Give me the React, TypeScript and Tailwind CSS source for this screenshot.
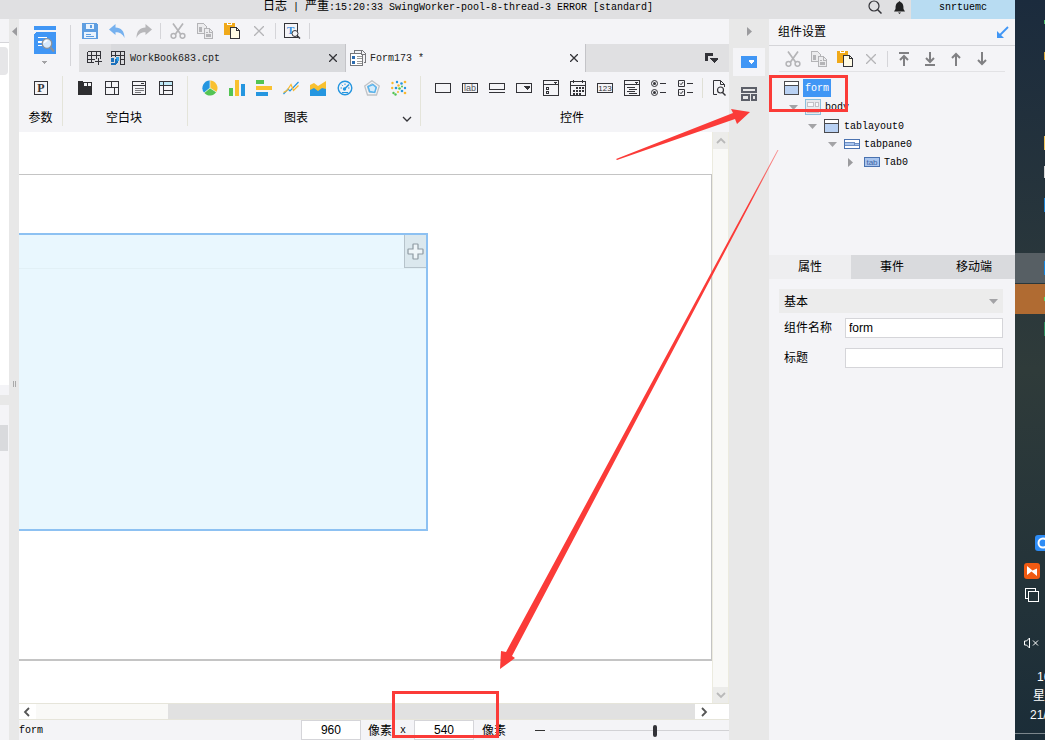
import type { ReactNode } from "react";

const CJK = "font-['Liberation_Sans','Noto_Sans_CJK_SC',sans-serif]";
const MONO = "font-['Liberation_Mono','Noto_Sans_CJK_SC',monospace]";

function Svg({ children, w = 16, h = 16, crisp = true }: { children: ReactNode; w?: number; h?: number; crisp?: boolean }) {
  return (
    <svg
      width={w}
      height={h}
      viewBox={`0 0 ${w} ${h}`}
      fill="none"
      shapeRendering={crisp ? "crispEdges" : "auto"}
      className="block shrink-0"
      aria-hidden="true"
    >
      {children}
    </svg>
  );
}

const K = "#333338";
const G = "#b4b4b7";

const Save = () => (
  <Svg>
    <path d="M0 0h14l2 2v14H0z" fill="#5f9ee0" />
    <path d="M4 1h8v5H4z" fill="#eaf3fd" />
    <path d="M8 2h2v3H8z" fill="#5f9ee0" />
    <path d="M2 9h12v6H2z" fill="#eaf3fd" />
    <path d="M4 11h5v1H4zM4 13h8v1H4z" fill="#5f9ee0" />
  </Svg>
);
const Undo = () => (
  <Svg crisp={false}>
    <path d="M0 6.500 6.500 1v3.500C12 4.500 15.500 8 15.500 15 13.500 11 11 9.300 6.500 9.300V12z" fill="#76b1ef" />
  </Svg>
);
const Redo = () => (
  <Svg crisp={false}>
    <path d="M16 6.500 9.500 1v3.500C4 4.500.500 8 .500 15 2.500 11 5 9.300 9.500 9.300V12z" fill="#b7b7ba" />
  </Svg>
);
const Cut = () => (
  <Svg crisp={false}>
    <path d="M3 0.500 10.500 11M13 0.500 5.500 11" stroke={G} strokeWidth="1.700" />
    <circle cx="3.500" cy="12.800" r="2.400" stroke={G} strokeWidth="1.500" />
    <circle cx="12.500" cy="12.800" r="2.400" stroke={G} strokeWidth="1.500" />
  </Svg>
);
const Copy = () => (
  <Svg>
    <path d="M.5.500h6l3 3v7h-9z" stroke={G} fill="#ececee" />
    <path d="M2 4h3v5H2z" fill={G} />
    <path d="M7.500 5.500h5l3 3v7h-8z" stroke={G} fill="#ececee" />
    <path d="M9 9h2v1H9zM9 11h5v3H9zM12 6h1v3h2v1h-3z" fill={G} />
  </Svg>
);
const Paste = () => (
  <Svg>
    <path d="M0 0h11v12H0z" fill="#f0a919" />
    <path d="M3 0h5v2H3z" fill="#fff" />
    <path d="M4 0h3v1H4z" fill="#f0a919" />
    <path d="M6.500 4.500h6l3 3v8h-9z" fill="#fffbe6" stroke={K} />
    <path d="M12.500 4.500v3h3" stroke={K} />
  </Svg>
);
const Cross = ({ c = G }: { c?: string }) => (
  <Svg w={10} h={10} crisp={false}>
    <path d="M0 0l10 10M10 0 0 10" stroke={c} strokeWidth="1.300" />
  </Svg>
);
const TextFind = () => (
  <Svg w={17}>
    <path d="M.5.500h13v14H.5z" stroke={K} />
    <text x="3" y="11" fontSize="11" fontWeight="700" fontFamily="Liberation Serif" fill="#3b8ee0">T</text>
    <g shapeRendering="auto">
      <circle cx="11" cy="10.500" r="3" fill="#f4f4f7" stroke={K} />
      <path d="m13 12.500 3 3" stroke={K} strokeWidth="1.500" />
    </g>
  </Svg>
);
const Logo = () => (
  <Svg w={22} h={28}>
    <path d="M0 0h22v4H0zM2 6h20v22H0V8z" fill="#4096f5" />
    <path d="M4 11h9v1H4zM4 15h5v2H4zM4 19h5v1H4z" fill="#fff" />
    <g shapeRendering="auto">
      <circle cx="13" cy="17.500" r="4.800" fill="#d7e9fb" stroke="#8d9299" strokeWidth="1.300" />
      <path d="M10.500 17a3 3 0 0 1 3-2.500" stroke="#fff" strokeWidth="1.300" />
      <path d="m16.500 21.500 3.500 4" stroke="#8d9299" strokeWidth="2.200" />
    </g>
  </Svg>
);
const Down = ({ c = "#a3a3a6" }: { c?: string }) => (
  <Svg w={9} h={5} crisp={false}>
    <path d="M0 0h9L4.500 5z" fill={c} />
  </Svg>
);
const Side = ({ left = false }: { left?: boolean }) => (
  <Svg w={5} h={9} crisp={false}>
    <path d={left ? "M5 0v9L0 4.500z" : "M0 0v9l5-4.500z"} fill="#9b9b9e" />
  </Svg>
);
const NewTable = () => (
  <Svg w={15} h={14}>
    <path d="M.5.500h13v7M.5.500v11h6M.5 4.500h13M.5 8.500h7M4.500.500v11M9.500.500v7" stroke={K} />
    <path d="M11.500 7v7M8 10.500h7" stroke={K} />
  </Svg>
);
const BookIcon = () => (
  <Svg w={14} h={14}>
    <path d="M.5 6V.500h13v13H9M.5 4.500h13M9 8.500h5M4.500.500V6M9.500.500V13" stroke={K} />
    <path d="M0 7h3v4H0zM0 12h4V8h3v3l-2 3H0z" fill="#1c72bd" />
    <path d="M5 6h3v4H6z" fill="#34a5e6" />
  </Svg>
);
const FormIcon = () => (
  <Svg w={16} h={16}>
    <path d="M4.500 3V.500h8l3 3v9H14" stroke="#77777b" />
    <path d="M11.500.500v4h4" stroke="#77777b" />
    <path d="M.5 3.500h11l1 2v10H.5z" fill="#fff" stroke="#77777b" />
    <path d="M2 6h3v3H2zM2 11h3v3H2z" fill="#2c6bb0" />
    <path d="M7 6h5v1H7zM7 8h5v1H7zM7 11h5v1H7zM7 13h5v1H7z" fill="#999" />
  </Svg>
);
const TabMenu = () => (
  <Svg w={13} h={11}>
    <path d="M0 0h8v3H3v5H0z" fill={K} />
    <path d="M5 5h8v1L9 10 5 6z" fill={K} />
  </Svg>
);
const Param = () => (
  <Svg w={14} h={14}>
    <path d="M.5.500h13v13H.5z" stroke={K} />
    <text x="7" y="11" textAnchor="middle" fontSize="12" fontWeight="700" fontFamily="Liberation Serif" fill={K}>P</text>
  </Svg>
);
const blanks = [
  {
    n: "Tab块",
    i: (
      <Svg w={14} h={14}>
        <path d="M0 0h5v1h9v13H0z" fill="#2e2e31" />
        <path d="M6 2h3v3H6zM10 2h3v3h-3z" fill="#f4f4f7" />
      </Svg>
    ),
  },
  {
    n: "绝对画布块",
    i: (
      <Svg w={14} h={14}>
        <path d="M.5.500h13v13H.5zM.5 6.500h13M6.500.500v6M9.500 6.500v7" stroke={K} />
      </Svg>
    ),
  },
  {
    n: "报表块",
    i: (
      <Svg w={14} h={14}>
        <path d="M.5.500h13v13H.5zM.5 4.500h13M9 2.500h3" stroke={K} />
        <path d="M2.500 7.500h9M2.500 9.500h9M2.500 11.500h6" stroke="#77777b" />
      </Svg>
    ),
  },
  {
    n: "表格块",
    i: (
      <Svg w={14} h={14}>
        <path d="M1 1h12v3H1z" fill="#bfe9f7" />
        <path d="M.5.500h13v13H.5zM.5 4.500h13M4.500.500v13M4.500 9.500h9" stroke={K} />
      </Svg>
    ),
  },
];
const charts = [
  {
    n: "饼图",
    i: (
      <Svg crisp={false}>
        <path d="M8 8V.500A7.500 7.500 0 0 0 2.200 12.800z" fill="#2596e0" />
        <path d="M8 8V.500A7.500 7.500 0 0 1 14.300 12z" fill="#f9c130" />
        <path d="M8 8 2.200 12.800a7.500 7.500 0 0 0 12.100-.8z" fill="#53c453" />
        <path d="M8 .500V8L2.200 12.800M8 8l6.300 4" stroke="#f4f4f7" strokeWidth=".7" />
      </Svg>
    ),
  },
  {
    n: "柱形图",
    i: (
      <Svg>
        <path d="M0 8h4v8H0z" fill="#53c453" />
        <path d="M6 0h4v16H6z" fill="#f9c130" />
        <path d="M12 4h4v12h-4z" fill="#2596e0" />
      </Svg>
    ),
  },
  {
    n: "条形图",
    i: (
      <Svg>
        <path d="M0 0h8v4H0z" fill="#53c453" />
        <path d="M0 6h16v4H0z" fill="#f9c130" />
        <path d="M0 12h12v4H0z" fill="#2596e0" />
      </Svg>
    ),
  },
  {
    n: "折线图",
    i: (
      <Svg crisp={false}>
        <path d="m.5 14 4.500-5 2 2 8.500-9" stroke="#2596e0" strokeWidth="1.200" />
        <path d="m.5 12.500 3.500-2 4-6 2.500 6 5-5" stroke="#f9b930" strokeWidth="1.200" />
      </Svg>
    ),
  },
  {
    n: "面积图",
    i: (
      <Svg crisp={false}>
        <path d="m0 5 4-2 4 3 8-5v15H0z" fill="#f9c130" />
        <path d="m0 10 4-2 4 3 4-3 4 1v7H0z" fill="#2596e0" />
      </Svg>
    ),
  },
  {
    n: "仪表盘",
    i: (
      <Svg crisp={false}>
        <circle cx="8" cy="8" r="6.800" stroke="#2596e0" strokeWidth="1.400" />
        <path d="M3.500 8H5M8 3.500V5M4.800 4.800l1 1M11 8h1.500" stroke="#2596e0" />
        <path d="M7.200 9.300 12 4.500" stroke="#2596e0" strokeWidth="1.600" />
        <circle cx="7.500" cy="9" r="1.700" fill="#2596e0" />
        <path d="M5 12.500h6" stroke="#2596e0" />
      </Svg>
    ),
  },
  {
    n: "雷达图",
    i: (
      <Svg crisp={false}>
        <path d="m8 .700 7.300 5.300-2.800 9h-9L.7 6z" stroke="#c0c3c7" strokeWidth="1.300" />
        <path d="m8 3.500 4.600 3.300-1.800 5.700H5.200L3.400 6.800z" fill="#d6ecfb" stroke="#c0c3c7" />
        <path d="m4 6.500 5-2 3.200 3-1.500 5-5-1z" stroke="#58b4ee" strokeWidth="1.500" />
      </Svg>
    ),
  },
  {
    n: "散点图",
    i: (
      <Svg crisp={false}>
        <g fill="#2596e0">
          <circle cx="6" cy="2" r="1.200" /><circle cx="10.500" cy="3.500" r="1.300" /><circle cx="5" cy="8" r="1.300" />
          <circle cx="11" cy="11" r="1.300" /><circle cx="14" cy="8" r="1.200" />
        </g>
        <g fill="#f9b930">
          <circle cx="1.500" cy="3" r="1.200" /><circle cx="14" cy="2" r="1.300" /><circle cx="7.500" cy="5.500" r="1.200" />
          <circle cx="1.200" cy="8" r="1.200" /><circle cx="14" cy="13" r="1.300" /><circle cx="7" cy="12" r="1" />
        </g>
        <g fill="#53c453">
          <circle cx="8.500" cy="8.500" r="1.300" /><circle cx="2.500" cy="13" r="1.200" /><circle cx="4.500" cy="14.500" r="1.200" />
          <circle cx="11" cy="6.500" r="1" />
        </g>
      </Svg>
    ),
  },
];
const widgets = [
  { n: "文本", i: <Svg><path d="M.5 3.500h15v9H.5z" stroke={K} /></Svg> },
  {
    n: "标签",
    i: (
      <Svg>
        <path d="M.5 3.500h15v9H.5z" stroke={K} />
        <text x="8" y="11" textAnchor="middle" fontSize="9" fontFamily="Liberation Sans" fill="#55555a">lab</text>
      </Svg>
    ),
  },
  { n: "按钮", i: <Svg><path d="M.5 3.500h15v6H.5zM0 12.500h16" stroke={K} /></Svg> },
  {
    n: "下拉框",
    i: (
      <Svg>
        <path d="M.5 3.500h15v9H.5z" stroke={K} />
        <path d="M8 6h6v1l-3 3-3-3z" fill={K} />
      </Svg>
    ),
  },
  {
    n: "下拉复选框",
    i: (
      <Svg>
        <path d="M.5.500h15v15H.5zM.5 4.500h15M3.500 7.500h2v2h-2zM3.500 11.500h2v2h-2z" stroke={K} />
        <path d="M10 2h4l-2 2z" fill={K} />
      </Svg>
    ),
  },
  {
    n: "日期",
    i: (
      <Svg>
        <path d="M.5 1.500h15v14H.5zM.5 5.500h15M3.500 0v3M12.500 0v3" stroke={K} />
        <path d="M6 8h8M3 11h11M3 14h8" stroke={K} strokeWidth="2" strokeDasharray="2 1" />
      </Svg>
    ),
  },
  {
    n: "数字",
    i: (
      <Svg>
        <path d="M.5 3.500h15v9H.5z" stroke={K} />
        <text x="8" y="11" textAnchor="middle" fontSize="8" fontFamily="Liberation Sans" fill={K}>123</text>
      </Svg>
    ),
  },
  {
    n: "列表",
    i: (
      <Svg>
        <path d="M.5.500h15v15H.5zM.5 4.500h15M3 7.500h8M5 9.500h8M3 11.500h8M5 13.500h8" stroke={K} />
        <path d="M10 2h4l-2 2z" fill={K} />
      </Svg>
    ),
  },
  {
    n: "单选按钮组",
    i: (
      <Svg crisp={false}>
        <circle cx="3.500" cy="3.500" r="3" stroke={K} />
        <circle cx="3.500" cy="12.500" r="3" stroke={K} />
        <circle cx="3.500" cy="3.500" r="1.500" fill={K} />
        <circle cx="3.500" cy="12.500" r="1.500" fill={K} />
        <path d="M9 3.500h6M9 12.500h6" stroke={K} />
      </Svg>
    ),
  },
  {
    n: "复选按钮组",
    i: (
      <Svg crisp={false}>
        <path d="M.5.500h6v6h-6zM.5 9.500h6v6h-6zM9 3.500h6M9 12.500h6" stroke={K} />
        <path d="m2 3.500 1 1.200L5.200 2M2 12.500l1 1.200L5.200 11" stroke={K} />
      </Svg>
    ),
  },
];
const Preview = () => (
  <Svg w={13} h={16} crisp={false}>
    <path d="M4 14.500H.5V.500h7l4 4V7M7.500.500v4h4" stroke={K} />
    <circle cx="7.500" cy="10" r="3" stroke={K} strokeWidth="1.200" />
    <path d="m9.500 12.500 3 3" stroke={K} strokeWidth="1.400" />
  </Svg>
);
const WindowIcon = () => (
  <Svg w={15} h={14}>
    <path d="M.5.500h14v13H.5z" fill="#b9d1f3" stroke="#4a4a4e" />
    <path d="M1 1h13v3H1z" fill="#fff" />
    <path d="M1 4.500h13" stroke="#4a4a4e" />
  </Svg>
);
const BodyIcon = () => (
  <Svg>
    <path d="M.5.500h15v15H.5z" fill="#e9e9ec" stroke="#8cc0dc" />
    <path d="M2.500 3.500h6v4h-6zM10.500 3.500h3v4h-3zM2.500 10.500h11v3h-11z" fill="#f8f8fa" stroke="#c2c2c6" />
  </Svg>
);
const PaneIcon = () => (
  <Svg h={10}>
    <path d="M.5.500h15v9H.5z" fill="#fff" stroke="#4a72b0" />
    <path d="M1 4h9v1h5v1H1z" fill="#a9c5ee" />
    <path d="M1 3.500h9v1h5M10.500 4v3M1 6.500h14" stroke="#6d8fc4" />
  </Svg>
);
const TabIcon = () => (
  <Svg h={10}>
    <path d="M.5.500h15v9H.5z" fill="#a9c5ee" stroke="#4a72b0" />
    <text x="8" y="8" textAnchor="middle" fontSize="8" fontFamily="Liberation Sans" fill="#3f66a6">tab</text>
  </Svg>
);
const Arrow = ({ d }: { d: string }) => (
  <Svg w={10} h={14} crisp={false}>
    <path d={d} stroke="#808083" strokeWidth="2" />
  </Svg>
);
const Chevron = ({ d, c = "#555", s = 1.8 }: { d: string; c?: string; s?: number }) => (
  <Svg w={10} h={10} crisp={false}>
    <path d={d} stroke={c} strokeWidth={s} />
  </Svg>
);

function IconButton({ label, children, className = "w-[27px]" }: { label: string; children: ReactNode; className?: string }) {
  return (
    <button type="button" aria-label={label} className={`flex h-6 shrink-0 items-center justify-center ${className}`}>
      {children}
    </button>
  );
}

const Rule = () => <span className="mx-[3px] h-4 w-px shrink-0 bg-[#d5d5d9]" />;

function Group({ label, children, className, labelClass = "" }: { label: string; children: ReactNode; className: string; labelClass?: string }) {
  return (
    <section className={`flex shrink-0 flex-col items-center ${className}`}>
      <div className="flex h-8 items-center">{children}</div>
      <h2 className={`mt-1 text-xs leading-5 ${labelClass}`}>{label}</h2>
    </section>
  );
}
const GroupRule = () => <span className="mt-1 h-[50px] w-px shrink-0 bg-[#e4e4da]" />;

function TopBar() {
  return (
    <header className="flex h-[19px] shrink-0 bg-[#e0e0e2]">
      <p className={`flex-1 pl-[263px] text-[10px] leading-[15px] whitespace-pre ${MONO}`}>
        <span className="text-xs leading-[14px]">日志</span> | <span className="text-xs leading-[14px]">严重</span>:15:20:33 SwingWorker-pool-8-thread-3 ERROR [standard]
      </p>
      <IconButton label="搜索" className="-mt-[5px] w-6">
        <Svg w={14} h={14} crisp={false}>
          <circle cx="6" cy="6" r="5" stroke={K} strokeWidth="1.200" />
          <path d="m9.500 9.500 4 4" stroke={K} strokeWidth="1.500" />
        </Svg>
      </IconButton>
      <IconButton label="通知" className="-mt-[5px] w-6">
        <Svg w={11} h={13} crisp={false}>
          <path d="M5.500 0 6.500 1C9 2 9.500 4 9.500 8L11 10.500H0L1.500 8C1.500 4 2 2 4.500 1zM4 11.500h3L5.500 13z" fill="#222" />
        </Svg>
      </IconButton>
      <a href="#account" className={`w-[104px] bg-[#b8dcf2] text-center text-[10px] leading-4 ${MONO}`}>
        snrtuemc
      </a>
    </header>
  );
}

function LeftRail() {
  return (
    <aside className="flex w-[9px] shrink-0 flex-col bg-[#f4f4f7]">
      <div className="h-6 border-b border-[#d5d5d9]" />
      <div className="flex-1 bg-white pt-1">
        <div className="h-7 w-2 rounded-r-[4px] bg-[#e6e6e8]" />
      </div>
      <div className="h-2.5" />
      <div className="h-2.5 bg-[#e8e8e8]" />
      <div className="mt-5 h-[26px] w-2 bg-[#d9dadd]" />
      <div className="h-[289px]" />
    </aside>
  );
}

function FileTabs() {
  return (
    <nav className={`flex h-7 bg-[#e0e0e2] text-[10px] text-[#222] ${MONO}`}>
      <IconButton label="新建" className="mt-0.5 w-8 pr-0.5">
        <NewTable />
      </IconButton>
      <div className="flex w-[235px] items-center border-r border-[#c4c4c8] bg-[#d9dadd]">
        <BookIcon />
        <button type="button" className="flex-1 pl-[5px] text-left">WorkBook683.cpt</button>
        <IconButton label="关闭 WorkBook683.cpt" className="w-6">
          <Svg w={8} h={8} crisp={false}><path d="M0 0l8 8M8 0 0 8" stroke={K} strokeWidth="1.300" /></Svg>
        </IconButton>
      </div>
      <div className="flex w-60 items-center border-r border-[#c4c4c8] bg-[#f4f4f7] pl-1">
        <FormIcon />
        <button type="button" className="flex-1 pl-1 text-left">Form173 *</button>
        <IconButton label="关闭 Form173" className="w-[22px]">
          <Svg w={8} h={8} crisp={false}><path d="M0 0l8 8M8 0 0 8" stroke={K} strokeWidth="1.300" /></Svg>
        </IconButton>
      </div>
      <IconButton label="标签列表" className="mt-0.5 ml-auto w-9">
        <TabMenu />
      </IconButton>
    </nav>
  );
}

function Ribbon() {
  return (
    <div className="flex h-[60px] shrink-0 overflow-hidden">
      <Group label="参数" className="w-[43px]">
        <IconButton label="参数"><Param /></IconButton>
      </Group>
      <GroupRule />
      <Group label="空白块" className="w-[124px]" labelClass="pr-0.5">
        {blanks.map((b) => <IconButton key={b.n} label={b.n}>{b.i}</IconButton>)}
      </Group>
      <GroupRule />
      <div className="relative shrink-0">
        <Group label="图表" className="w-[232px]" labelClass="pr-4">
          {charts.map((b) => <IconButton key={b.n} label={b.n}>{b.i}</IconButton>)}
        </Group>
        <button type="button" aria-label="更多图表" className="absolute right-2 bottom-2">
          <Chevron d="M1 3l4 4 4-4" c={K} s={1.3} />
        </button>
      </div>
      <GroupRule />
      <div className="flex min-w-0 flex-1 flex-col">
        <div className="flex h-8 items-center pl-2">
          {widgets.map((b) => <IconButton key={b.n} label={b.n}>{b.i}</IconButton>)}
          <span className="mx-[3px] h-5 w-px shrink-0 bg-[#e0e0d6]" />
          <IconButton label="预览" className="w-[27px]"><Preview /></IconButton>
        </div>
        <h2 className="mt-1 pr-1.5 text-center text-xs leading-5">控件</h2>
      </div>
    </div>
  );
}

function Canvas() {
  return (
    <div className="flex min-h-0 flex-1">
      <div className="min-w-0 flex-1 bg-white pt-[42px]">
        <div className="h-[487px] border-t border-r border-b-2 border-[#c4c4c4] pt-[58px]">
          <div className="flex h-[298px] w-[409px] items-start justify-end border-2 border-l-0 border-[#8dc1f2] bg-[#e9f7fe]">
            <div className="flex flex-1 justify-end border-b border-[#e2f0f6]">
              <button type="button" aria-label="添加" className="flex h-[33px] w-[22px] items-center justify-center border-b border-l border-[#b6c3cb] bg-[#dbe8ee]">
                <Svg w={17} h={17} crisp={false}>
                  <path d="M6 1.500q0-.5.500-.5h4q.5 0 .5.500V6h4.500q.5 0 .5.500v4q0 .5-.5.500H11v4.500q0 .5-.5.500h-4q-.5 0-.5-.5V11H1.500q-.5 0-.5-.5v-4Q1 6 1.500 6H6z" fill="#eef5f8" stroke="#8e9aa2" strokeWidth="1.200" />
                </Svg>
              </button>
            </div>
          </div>
        </div>
      </div>
      <div className="flex w-[17px] flex-col border-x border-[#ecebdf] bg-[#f9f9f7]">
        <button type="button" aria-label="向上滚动" className="flex h-[17px] items-center justify-center bg-[#ececea]">
          <Chevron d="M1 7l4-4 4 4" c="#b9b9b9" />
        </button>
        <div className="flex-1" />
        <button type="button" aria-label="向下滚动" className="flex h-4 items-center justify-center bg-[#ececea]">
          <Chevron d="M1 3l4 4 4-4" c="#b9b9b9" />
        </button>
      </div>
    </div>
  );
}

function HScroll() {
  return (
    <div className="flex h-[17px] shrink-0 border-y border-[#e6e5da] bg-white">
      <button type="button" aria-label="向左滚动" className="flex w-[17px] items-center justify-center pr-0.5">
        <Chevron d="M7 1 3 5l4 4" />
      </button>
      <div className="w-[132px] bg-[#f9f9f7]" />
      <div className="flex-1 bg-[#e1e1e1]" />
      <button type="button" aria-label="向右滚动" className="mr-4 flex w-[18px] items-center justify-center">
        <Chevron d="M3 1l4 4-4 4" />
      </button>
    </div>
  );
}

function StatusBar() {
  return (
    <footer className={`flex h-5 shrink-0 items-center text-[10px] leading-5 ${MONO}`}>
      <span className="flex-1 pt-px">form</span>
      <input aria-label="宽度" defaultValue="960" className="h-5 w-[60px] border border-[#d5d5d9] bg-white text-center font-['Liberation_Sans',sans-serif] text-xs" />
      <span className={`ml-[7px] pt-px text-xs leading-5 ${CJK}`}>像素</span>
      <span className="mx-2 pt-px">x</span>
      <input aria-label="高度" defaultValue="540" className="h-5 w-[60px] border border-[#d5d5d9] bg-white text-center font-['Liberation_Sans',sans-serif] text-xs" />
      <span className={`ml-2 pt-px text-xs leading-5 ${CJK}`}>像素</span>
      <button type="button" aria-label="缩小" className="ml-6 flex h-5 w-5 items-center justify-center">
        <span className="h-px w-2.5 bg-[#333]" />
      </button>
      <input
        type="range"
        aria-label="缩放"
        defaultValue={59}
        className="h-5 w-[179px] appearance-none bg-transparent [&::-webkit-slider-runnable-track]:h-px [&::-webkit-slider-runnable-track]:bg-[#d2d2d5] [&::-webkit-slider-thumb]:-mt-[5px] [&::-webkit-slider-thumb]:h-3 [&::-webkit-slider-thumb]:w-1 [&::-webkit-slider-thumb]:appearance-none [&::-webkit-slider-thumb]:rounded-[2px] [&::-webkit-slider-thumb]:bg-[#333338]"
      />
    </footer>
  );
}

function Editor() {
  return (
    <main className="flex min-w-0 flex-1 flex-col bg-[#f4f4f7]">
      <div className="flex h-[53px] shrink-0">
        <div className="my-1.5 flex w-[52px] shrink-0 flex-col items-center border-r border-[#d5d5d9]">
          <button type="button" aria-label="模板" className="mt-px flex flex-col items-center gap-[7px]">
            <Logo />
            <Svg w={5} h={3}><path d="M0 0h5L3 3H2z" fill="#a3a3a6" /></Svg>
          </button>
        </div>
        <div className="min-w-0 flex-1">
          <div className="flex h-[25px] items-center pb-0.5 pl-[5px]">
            <IconButton label="保存"><Save /></IconButton>
            <IconButton label="撤销"><Undo /></IconButton>
            <IconButton label="重做"><Redo /></IconButton>
            <Rule />
            <IconButton label="剪切"><Cut /></IconButton>
            <IconButton label="复制"><Copy /></IconButton>
            <IconButton label="粘贴"><Paste /></IconButton>
            <IconButton label="删除"><Cross /></IconButton>
            <Rule />
            <IconButton label="查找"><TextFind /></IconButton>
            <Rule />
          </div>
          <div className="pl-2">
            <FileTabs />
          </div>
        </div>
      </div>
      <Ribbon />
      <Canvas />
      <HScroll />
      <StatusBar />
    </main>
  );
}

function SideStrip() {
  return (
    <aside className="flex w-10 shrink-0 flex-col items-center bg-[#e8e8e8]">
      <button type="button" aria-label="收起" className="mb-1 flex h-[25px] w-8 items-center justify-center">
        <Side />
      </button>
      <button type="button" aria-label="组件设置" className="flex h-7 w-8 items-center justify-center bg-[#f4f4f7]">
        <Svg h={12}>
          <path d="M0 0h16v12H0z" fill="#4096f5" />
          <path d="M8 4h5v1l-2 3h-1L8 5z" fill="#fff" />
        </Svg>
      </button>
      <button type="button" aria-label="组件库" className="mt-1 flex h-7 w-8 items-center justify-center">
        <Svg h={14}>
          <path d="M1 1h14v4H1zM1 8h7v5H1zM11 8h4v5h-4z" stroke="#5c5f68" strokeWidth="2" />
        </Svg>
      </button>
    </aside>
  );
}

const tree = [
  { name: "form", icon: <WindowIcon />, pad: "pl-0", height: "h-[18px] gap-1", arrow: null, label: "bg-[#4096f5] px-0.5 text-white" },
  { name: "body", icon: <BodyIcon />, pad: "pl-[5px]", height: "h-5", arrow: <Down />, label: "pl-1" },
  { name: "tablayout0", icon: <WindowIcon />, pad: "pl-6", height: "h-[18px]", arrow: <Down />, label: "pl-[5px]" },
  { name: "tabpane0", icon: <PaneIcon />, pad: "pl-11", height: "h-[18px]", arrow: <Down />, label: "pl-1" },
  { name: "Tab0", icon: <TabIcon />, pad: "pl-16", height: "h-[18px]", arrow: <Side />, label: "pl-1" },
];

function Properties() {
  return (
    <aside className="flex w-[246px] shrink-0 flex-col bg-[#f4f4f7]">
      <div className="flex h-[27px] items-center justify-between border-b border-[#d5d5d9] pr-1.5 pl-[9px]">
        <h1 className="text-xs">组件设置</h1>
        <button type="button" aria-label="弹出">
          <Svg w={12} h={12} crisp={false}>
            <path d="M11 1 3 9" stroke="#4096f5" strokeWidth="1.800" />
            <path d="M0 5v7h7z" fill="#4096f5" />
          </Svg>
        </button>
      </div>
      <div className="mx-2.5 flex h-[26px] items-center border-b border-[#e2e2e5] pl-px">
        <IconButton label="剪切" className="w-[26px]"><Cut /></IconButton>
        <IconButton label="复制" className="w-[26px]"><Copy /></IconButton>
        <IconButton label="粘贴" className="w-[26px]"><Paste /></IconButton>
        <IconButton label="删除" className="w-[26px]"><Cross /></IconButton>
        <Rule />
        <IconButton label="置顶" className="w-[26px]"><Arrow d="M0 1h10M5 14V4M1 8l4-4 4 4" /></IconButton>
        <IconButton label="置底" className="w-[26px]"><Arrow d="M0 13h10M5 0v10M1 6l4 4 4-4" /></IconButton>
        <IconButton label="上移" className="w-[26px]"><Arrow d="M5 14V2M1 6l4-4 4 4" /></IconButton>
        <IconButton label="下移" className="w-[26px]"><Arrow d="M5 0v12M1 8l4 4 4-4" /></IconButton>
      </div>
      <ul className={`h-[183px] pt-[7px] pl-[15px] text-[10px] ${MONO}`}>
        {tree.map((t) => (
          <li key={t.name} className={t.pad}>
            <button type="button" className={`flex items-center ${t.height}`}>
              {t.arrow && <span className="flex w-4 items-center">{t.arrow}</span>}
              {t.icon}
              <span className={`pt-px leading-[17px] ${t.label}`}>{t.name}</span>
            </button>
          </li>
        ))}
      </ul>
      <div role="tablist" className="flex h-6 text-xs">
        <button type="button" role="tab" aria-selected="true" className="flex-1 bg-[#eeeef0]">属性</button>
        <button type="button" role="tab" aria-selected="false" className="flex-1 bg-[#d9dadd]">事件</button>
        <button type="button" role="tab" aria-selected="false" className="flex-1 bg-[#d9dadd]">移动端</button>
      </div>
      <div className="flex flex-col pt-2.5 pr-3 pl-2.5 text-xs">
        <button type="button" className="flex h-6 items-center justify-between bg-[#ececec] px-[5px] pt-px">
          基本
          <Down />
        </button>
        <div className="mt-[5px] flex h-5 items-center">
          <label htmlFor="widget-name" className="w-[66px] pl-[5px]">组件名称</label>
          <input id="widget-name" defaultValue="form" className="h-5 min-w-0 flex-1 border border-[#d5d5d9] bg-white px-[3px] text-xs" />
        </div>
        <div className="mt-2.5 flex h-5 items-center">
          <label htmlFor="widget-title" className="w-[66px] pl-[5px]">标题</label>
          <input id="widget-title" className="h-5 min-w-0 flex-1 border border-[#d5d5d9] bg-white px-[3px] text-xs" />
        </div>
      </div>
    </aside>
  );
}

function Taskbar() {
  return (
    <aside className="flex w-[30px] shrink-0 flex-col overflow-hidden bg-linear-to-b from-[#1b2b3d] via-[#2f3b3a] to-[#1b2d38] text-white">
      <div className="flex h-[253px] flex-col items-end">
        <span className="mt-5 h-1 w-px bg-[#4bbd6b]" />
        <span className="mt-7 h-2 w-px bg-[#d9a93a]" />
        <span className="mt-[76px] h-3.5 w-px bg-[#f3c65c]" />
        <span className="mt-4 h-3 w-px bg-[#d8d8d8]" />
        <span className="mt-5 h-3.5 w-px bg-[#1f84d2]" />
      </div>
      <div className="flex h-[30px] items-center justify-end bg-[#575f64]">
        <span className="h-3.5 w-px bg-[#1687e0]" />
      </div>
      <div className="mt-px flex h-[30px] items-center justify-end bg-[#b06b32]">
        <span className="h-1 w-px bg-[#4fe06d]" />
      </div>
      <div className="mt-2 h-3.5 w-px self-end bg-[#2c8c5c]" />
      <div className="mt-[199px] ml-5 h-4">
        <Svg crisp={false}>
          <rect width="16" height="16" rx="3" fill="#2d8cf5" />
          <circle cx="8" cy="8" r="4.500" stroke="#fff" strokeWidth="2" />
        </Svg>
      </div>
      <div className="mt-3 ml-[9px]">
        <Svg crisp={false}>
          <rect width="16" height="16" rx="3" fill="#f05a12" />
          <path d="M3 3v9l4.500-3.500L13 13V5.500L8.500 7.500z" fill="#fff" />
        </Svg>
      </div>
      <div className="mt-[9px] ml-2.5">
        <Svg w={14} h={14}>
          <path d="M3.500 3.500h10v10h-10zM.5 10.500V.500h10" stroke="#fff" />
          <path d="M.5 10.500H3M10.500.500V3" stroke="#fff" />
        </Svg>
      </div>
      <div className="mt-[35px] ml-[9px]">
        <Svg w={15} h={12} crisp={false}>
          <path d="M.5 4h2l3-3v10l-3-3h-2zM9 3.500l5 5M14 3.500l-5 5" stroke="#fff" />
        </Svg>
      </div>
      <div className="mt-[19px] ml-[15px] flex w-[60px] flex-col text-xs leading-[19px] whitespace-nowrap">
        <span className="pl-[7px]">16:</span>
        <span className="pl-[3px]">星期</span>
        <span>21/</span>
      </div>
      <div className="mt-2 border-t border-[#7b868c]" />
    </aside>
  );
}

function Annotations() {
  return (
    <svg width="1045" height="740" viewBox="0 0 1045 740" fill="none" className="pointer-events-none absolute top-0 left-0" aria-hidden="true">
      <defs>
        <linearGradient id="tail" x1="778" y1="150" x2="750" y2="202" gradientUnits="userSpaceOnUse">
          <stop stopColor="#fb3b38" stopOpacity=".5" />
          <stop offset="1" stopColor="#fb3b38" />
        </linearGradient>
      </defs>
      <path d="M770.500 76.500h76v34h-76zM393.500 692.500h104v44h-104z" stroke="#fb3b38" strokeWidth="3" />
      <path d="M616 159 733 113l-2-4 19 3-13 12-2-5L617 160z" fill="#fb3b38" />
      <path d="M777.500 150 506 652l-5-1-1 18 15-11-3-2L778.500 150z" fill="url(#tail)" />
    </svg>
  );
}

export default function App() {
  return (
    <div className={`relative flex h-screen min-h-[740px] overflow-hidden text-black ${CJK}`}>
      <div className="flex min-w-0 flex-1 flex-col">
        <TopBar />
        <div className="flex min-h-0 flex-1">
          <LeftRail />
          <button type="button" aria-label="拖动面板" className="flex w-2.5 shrink-0 flex-col items-center bg-[#e8e8e8]">
            <span className="flex h-6 items-center"><Side left /></span>
            <span className="flex flex-1 items-center gap-px pb-4">
              <span className="h-1.5 w-px bg-[#aaa]" />
              <span className="h-1.5 w-px bg-[#aaa]" />
            </span>
          </button>
          <Editor />
          <SideStrip />
          <Properties />
        </div>
      </div>
      <Taskbar />
      <Annotations />
    </div>
  );
}
